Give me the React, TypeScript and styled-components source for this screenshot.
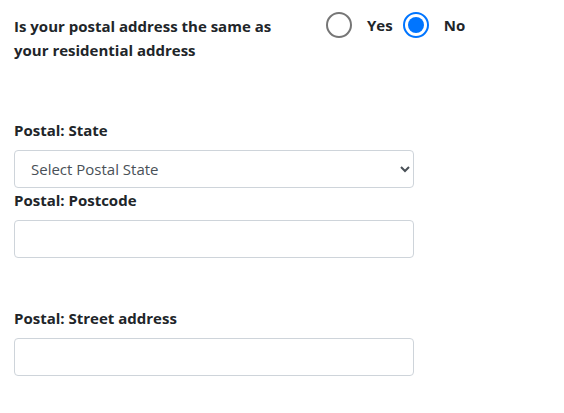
import styled, { createGlobalStyle } from 'styled-components';

const GlobalStyle = createGlobalStyle`
  body {
    margin: 0;
    background: #fff;
    font-family: "Open Sans", "Noto Sans", sans-serif;
    color: #212529;
  }
`

const Page = styled.div`
  padding: 14px 14px 0 14px;
  width: 400px;
`

const QuestionRow = styled.div`
  display: flex;
  flex-direction: row;
  align-items: flex-start;
  width: 540px;
`

const Question = styled.p`
  margin: 0;
  width: 280px;
  font-size: 15px;
  font-weight: 700;
  line-height: 24px;
`

const RadioGroup = styled.div`
  display: flex;
  flex-direction: row;
  align-items: center;
  margin-left: 32px;
  margin-top: -2px;
`

const RadioLabel = styled.label`
  display: flex;
  align-items: center;
  gap: 15px;
  margin-right: 10px;
  font-size: 15px;
  font-weight: 700;
  line-height: 24px;
`

const RadioCircle = styled.span<{ checked: boolean }>`
  box-sizing: border-box;
  width: 26px;
  height: 26px;
  border-radius: 50%;
  border: 2px solid ${p => (p.checked ? '#0075ff' : '#767676')};
  display: flex;
  align-items: center;
  justify-content: center;
  &::after {
    content: '';
    width: 16px;
    height: 16px;
    border-radius: 50%;
    background: #0075ff;
    display: ${p => (p.checked ? 'block' : 'none')};
  }
`

const Field = styled.div<{ spaced?: boolean }>`
  display: flex;
  flex-direction: column;
  margin-top: ${p => (p.spaced ? '48px' : '0')};
`

const FirstField = styled(Field)`
  margin-top: 56px;
`

const Label = styled.label`
  font-size: 15px;
  font-weight: 700;
  line-height: 24px;
  margin-bottom: 8px;
`

const Select = styled.select`
  box-sizing: border-box;
  width: 400px;
  height: 38px;
  padding: 6px 12px;
  font-family: "Open Sans", "Noto Sans", sans-serif;
  font-size: 15px;
  color: #495057;
  background: #fff;
  border: 1px solid #ced4da;
  border-radius: 4px;
  outline: none;
`

const Input = styled.input`
  box-sizing: border-box;
  width: 400px;
  height: 38px;
  padding: 6px 12px;
  font-family: "Open Sans", "Noto Sans", sans-serif;
  font-size: 15px;
  color: #495057;
  background: #fff;
  border: 1px solid #ced4da;
  border-radius: 4px;
  outline: none;
`

function Radio({ label, checked }: { label: string; checked: boolean }) {
  return (
    <RadioLabel>
      <RadioCircle checked={checked} />
      {label}
    </RadioLabel>
  )
}

export default function App() {
  return (
    <Page>
      <GlobalStyle />
      <QuestionRow>
        <Question>Is your postal address the same as your residential address</Question>
        <RadioGroup>
          <Radio label="Yes" checked={false} />
          <Radio label="No" checked={true} />
        </RadioGroup>
      </QuestionRow>
      <FirstField>
        <Label>Postal: State</Label>
        <Select defaultValue="">
          <option value="">Select Postal State</option>
          <option value="NSW">NSW</option>
          <option value="VIC">VIC</option>
        </Select>
      </FirstField>
      <Field>
        <Label>Postal: Postcode</Label>
        <Input type="text" />
      </Field>
      <Field spaced>
        <Label>Postal: Street address</Label>
        <Input type="text" />
      </Field>
    </Page>
  )
}
